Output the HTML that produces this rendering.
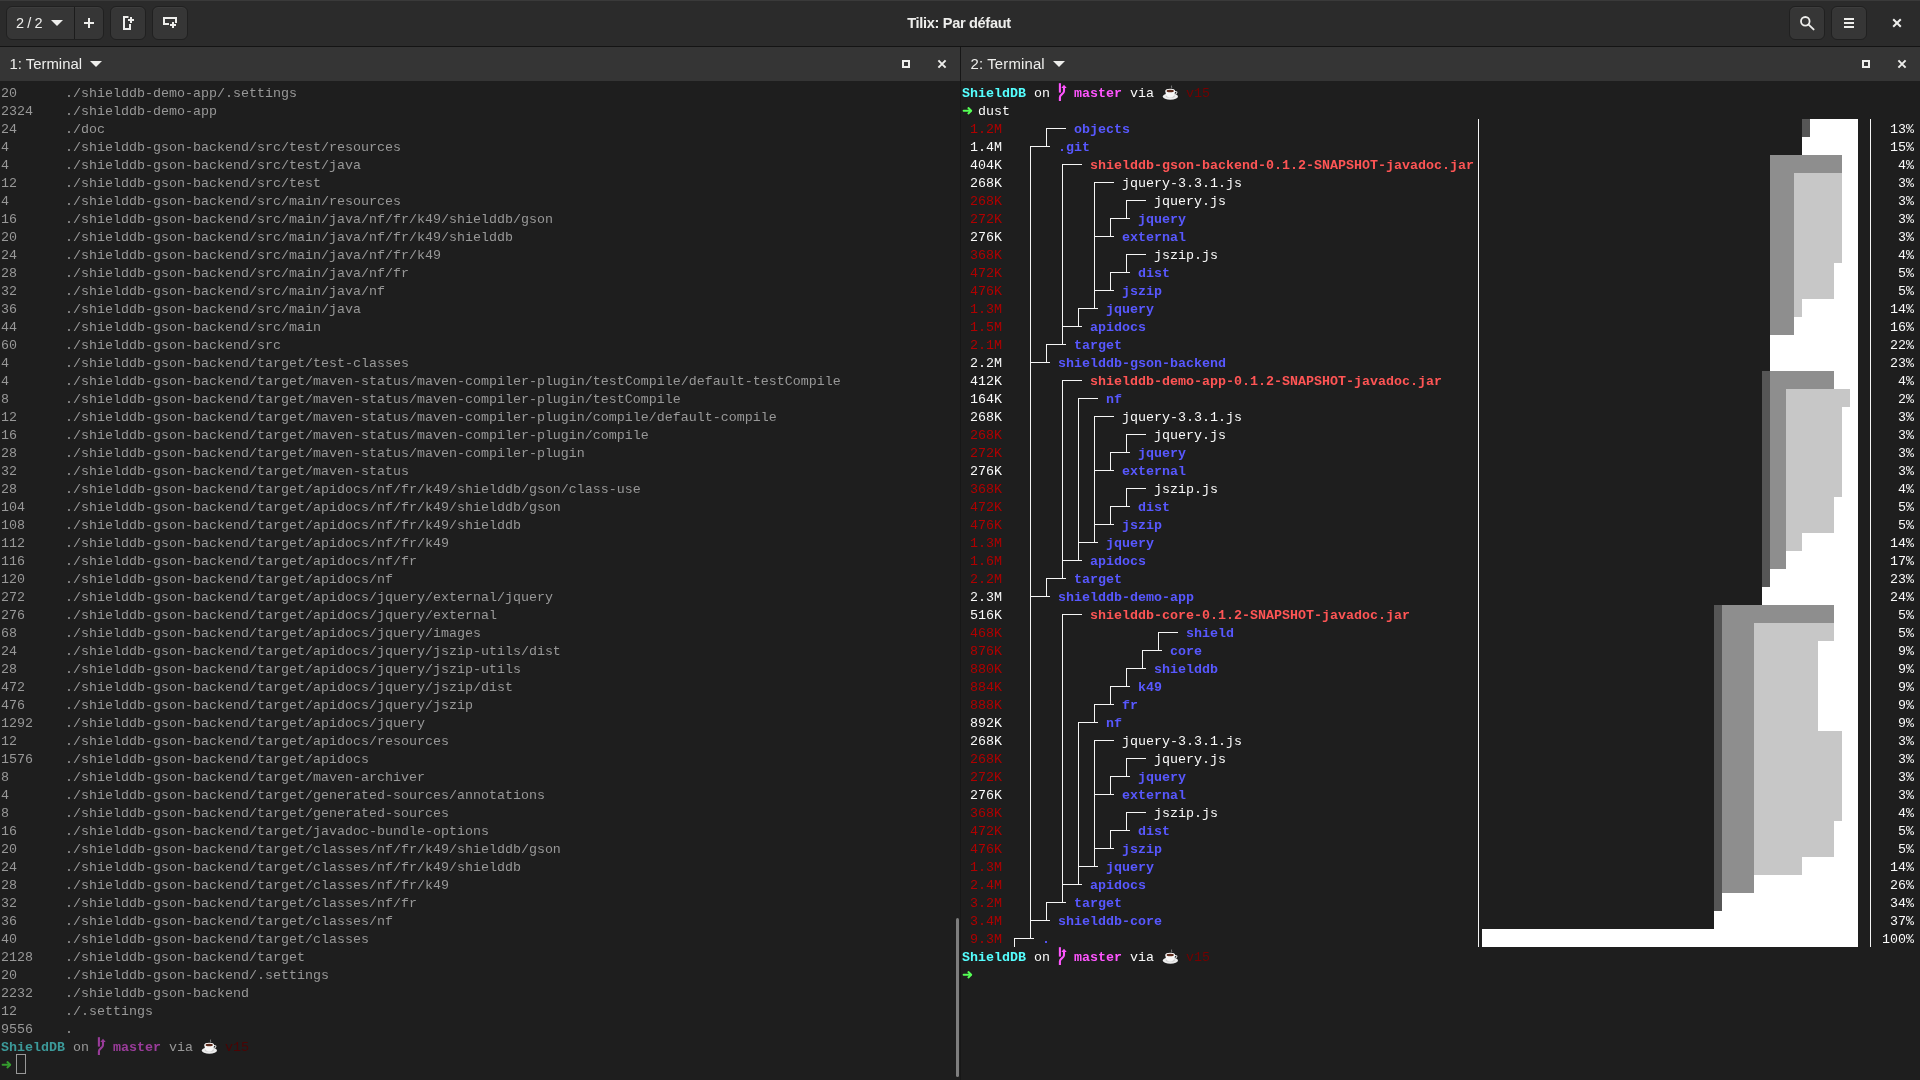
<!DOCTYPE html>
<html><head><meta charset="utf-8"><title>Tilix: Par défaut</title>
<style>
html,body{margin:0;padding:0}
body{width:1920px;height:1080px;overflow:hidden;background:#1e1e1e;position:relative;font-family:"Liberation Sans",sans-serif}
.ln{position:absolute;margin-top:2px;height:18px;line-height:18px;white-space:pre;font-family:"Liberation Mono",monospace;font-size:13.333px;letter-spacing:0}
.ln b{font-weight:bold}
.g{position:absolute;overflow:visible}
.a{position:absolute}
#hdr{position:absolute;left:0;top:0;width:1920px;height:46px;background:#2b2b2b;border-bottom:1px solid #141414;box-shadow:inset 0 1px 0 #3a3a3a}
.btn{position:absolute;top:6px;height:32px;background:#363636;border:1px solid #202020;border-radius:6px;box-sizing:content-box;box-shadow:inset 0 1px 0 #3d3d3d}
.pt{position:absolute;top:47px;height:34px;background:#353535}
.ptt{position:absolute;top:47px;height:34px;line-height:34px;font-size:14.9px;color:#eeeeec}
#title{position:absolute;left:-1px;top:0;width:1920px;height:46px;line-height:46px;text-align:center;color:#eeeeec;font-weight:bold;font-size:14.6px;letter-spacing:-0.33px}
#w{position:absolute;left:0;top:0;width:1920px;height:1080px;will-change:transform}
</style></head><body><div id="w">
<div id="hdr"></div>
<div id="title">Tilix: Par défaut</div>
<div class="btn" style="left:6px;width:96px"></div><div class="a" style="left:74px;top:7px;width:1px;height:32px;background:#1c1c1c"></div>
<div class="btn" style="left:110px;width:34px"></div>
<div class="btn" style="left:152px;width:34px"></div>
<div class="btn" style="left:1789px;width:34px"></div>
<div class="btn" style="left:1831px;width:34px"></div>
<div class="a" style="left:16px;top:7px;height:32px;line-height:32px;font-size:14.5px;word-spacing:-0.8px;color:#eeeeec">2 / 2</div>
<svg class="g" style="left:50px;top:19px" width="14" height="8" viewBox="0 0 14 8"><path d="M1 1H13L7 7Z" fill="#eeeeec"/></svg>
<svg class="g" style="left:81px;top:15px" width="16" height="16" viewBox="0 0 16 16"><path d="M7 3H9V7H13V9H9V13H7V9H3V7H7Z" fill="#eeeeec"/></svg>
<svg class="g" style="left:120px;top:15px" width="16" height="16" viewBox="0 0 16 16"><path d="M3 1H8.5V3H5V13H9V9H11V15H3Z" fill="#eeeeec"/><path d="M10 2H12V4H14V6H12V8H10V6H8V4H10Z" fill="#eeeeec"/></svg>
<svg class="g" style="left:162px;top:15px" width="16" height="16" viewBox="0 0 16 16"><path d="M1 2H15V8H13V4H3V8H7V10H1Z" fill="#eeeeec"/><path d="M10 7H12V9H14V11H12V13H10V11H8V9H10Z" fill="#eeeeec"/></svg>
<svg class="g" style="left:1799px;top:15px" width="16" height="16" viewBox="0 0 16 16"><circle cx="6.3" cy="6.3" r="4.3" fill="none" stroke="#eeeeec" stroke-width="1.8"/><path d="M9.6 9.6L14.6 14.4" stroke="#eeeeec" stroke-width="1.9" stroke-linecap="round"/></svg>
<svg class="g" style="left:1841px;top:15px" width="16" height="16" viewBox="0 0 16 16"><path d="M3 3H13V5H3ZM3 7H13V9H3ZM3 11H13V13H3Z" fill="#eeeeec"/></svg>
<svg class="g" style="left:1889px;top:15px" width="16" height="16" viewBox="0 0 16 16"><path d="M4.2 4.2L11.8 11.8M11.8 4.2L4.2 11.8" stroke="#eeeeec" stroke-width="2" fill="none"/></svg>
<div class="pt" style="left:0;width:960px"></div><div class="pt" style="left:961px;width:959px"></div>
<div class="a" style="left:960px;top:47px;width:1px;height:1033px;background:#171717"></div>
<div class="ptt" style="left:9.5px">1: Terminal</div>
<svg class="g" style="left:89px;top:60px" width="14" height="8" viewBox="0 0 14 8"><path d="M1 1H13L7 7Z" fill="#eeeeec"/></svg>
<div class="ptt" style="left:970.5px;letter-spacing:0.16px">2: Terminal</div>
<svg class="g" style="left:1052px;top:60px" width="14" height="8" viewBox="0 0 14 8"><path d="M1 1H13L7 7Z" fill="#eeeeec"/></svg>
<div class="a" style="left:902px;top:60px;width:4px;height:4px;border:2px solid #eeeeec"></div>
<svg class="g" style="left:934px;top:56px" width="16" height="16" viewBox="0 0 16 16"><path d="M4.4 4.4L11.6 11.6M11.6 4.4L4.4 11.6" stroke="#eeeeec" stroke-width="2" fill="none"/></svg>
<div class="a" style="left:1862px;top:60px;width:4px;height:4px;border:2px solid #eeeeec"></div>
<svg class="g" style="left:1894px;top:56px" width="16" height="16" viewBox="0 0 16 16"><path d="M4.4 4.4L11.6 11.6M11.6 4.4L4.4 11.6" stroke="#eeeeec" stroke-width="2" fill="none"/></svg>
<div class="ln" style="left:1px;top:83px;color:#989898">20      ./shielddb-demo-app/.settings</div>
<div class="ln" style="left:1px;top:101px;color:#989898">2324    ./shielddb-demo-app</div>
<div class="ln" style="left:1px;top:119px;color:#989898">24      ./doc</div>
<div class="ln" style="left:1px;top:137px;color:#989898">4       ./shielddb-gson-backend/src/test/resources</div>
<div class="ln" style="left:1px;top:155px;color:#989898">4       ./shielddb-gson-backend/src/test/java</div>
<div class="ln" style="left:1px;top:173px;color:#989898">12      ./shielddb-gson-backend/src/test</div>
<div class="ln" style="left:1px;top:191px;color:#989898">4       ./shielddb-gson-backend/src/main/resources</div>
<div class="ln" style="left:1px;top:209px;color:#989898">16      ./shielddb-gson-backend/src/main/java/nf/fr/k49/shielddb/gson</div>
<div class="ln" style="left:1px;top:227px;color:#989898">20      ./shielddb-gson-backend/src/main/java/nf/fr/k49/shielddb</div>
<div class="ln" style="left:1px;top:245px;color:#989898">24      ./shielddb-gson-backend/src/main/java/nf/fr/k49</div>
<div class="ln" style="left:1px;top:263px;color:#989898">28      ./shielddb-gson-backend/src/main/java/nf/fr</div>
<div class="ln" style="left:1px;top:281px;color:#989898">32      ./shielddb-gson-backend/src/main/java/nf</div>
<div class="ln" style="left:1px;top:299px;color:#989898">36      ./shielddb-gson-backend/src/main/java</div>
<div class="ln" style="left:1px;top:317px;color:#989898">44      ./shielddb-gson-backend/src/main</div>
<div class="ln" style="left:1px;top:335px;color:#989898">60      ./shielddb-gson-backend/src</div>
<div class="ln" style="left:1px;top:353px;color:#989898">4       ./shielddb-gson-backend/target/test-classes</div>
<div class="ln" style="left:1px;top:371px;color:#989898">4       ./shielddb-gson-backend/target/maven-status/maven-compiler-plugin/testCompile/default-testCompile</div>
<div class="ln" style="left:1px;top:389px;color:#989898">8       ./shielddb-gson-backend/target/maven-status/maven-compiler-plugin/testCompile</div>
<div class="ln" style="left:1px;top:407px;color:#989898">12      ./shielddb-gson-backend/target/maven-status/maven-compiler-plugin/compile/default-compile</div>
<div class="ln" style="left:1px;top:425px;color:#989898">16      ./shielddb-gson-backend/target/maven-status/maven-compiler-plugin/compile</div>
<div class="ln" style="left:1px;top:443px;color:#989898">28      ./shielddb-gson-backend/target/maven-status/maven-compiler-plugin</div>
<div class="ln" style="left:1px;top:461px;color:#989898">32      ./shielddb-gson-backend/target/maven-status</div>
<div class="ln" style="left:1px;top:479px;color:#989898">28      ./shielddb-gson-backend/target/apidocs/nf/fr/k49/shielddb/gson/class-use</div>
<div class="ln" style="left:1px;top:497px;color:#989898">104     ./shielddb-gson-backend/target/apidocs/nf/fr/k49/shielddb/gson</div>
<div class="ln" style="left:1px;top:515px;color:#989898">108     ./shielddb-gson-backend/target/apidocs/nf/fr/k49/shielddb</div>
<div class="ln" style="left:1px;top:533px;color:#989898">112     ./shielddb-gson-backend/target/apidocs/nf/fr/k49</div>
<div class="ln" style="left:1px;top:551px;color:#989898">116     ./shielddb-gson-backend/target/apidocs/nf/fr</div>
<div class="ln" style="left:1px;top:569px;color:#989898">120     ./shielddb-gson-backend/target/apidocs/nf</div>
<div class="ln" style="left:1px;top:587px;color:#989898">272     ./shielddb-gson-backend/target/apidocs/jquery/external/jquery</div>
<div class="ln" style="left:1px;top:605px;color:#989898">276     ./shielddb-gson-backend/target/apidocs/jquery/external</div>
<div class="ln" style="left:1px;top:623px;color:#989898">68      ./shielddb-gson-backend/target/apidocs/jquery/images</div>
<div class="ln" style="left:1px;top:641px;color:#989898">24      ./shielddb-gson-backend/target/apidocs/jquery/jszip-utils/dist</div>
<div class="ln" style="left:1px;top:659px;color:#989898">28      ./shielddb-gson-backend/target/apidocs/jquery/jszip-utils</div>
<div class="ln" style="left:1px;top:677px;color:#989898">472     ./shielddb-gson-backend/target/apidocs/jquery/jszip/dist</div>
<div class="ln" style="left:1px;top:695px;color:#989898">476     ./shielddb-gson-backend/target/apidocs/jquery/jszip</div>
<div class="ln" style="left:1px;top:713px;color:#989898">1292    ./shielddb-gson-backend/target/apidocs/jquery</div>
<div class="ln" style="left:1px;top:731px;color:#989898">12      ./shielddb-gson-backend/target/apidocs/resources</div>
<div class="ln" style="left:1px;top:749px;color:#989898">1576    ./shielddb-gson-backend/target/apidocs</div>
<div class="ln" style="left:1px;top:767px;color:#989898">8       ./shielddb-gson-backend/target/maven-archiver</div>
<div class="ln" style="left:1px;top:785px;color:#989898">4       ./shielddb-gson-backend/target/generated-sources/annotations</div>
<div class="ln" style="left:1px;top:803px;color:#989898">8       ./shielddb-gson-backend/target/generated-sources</div>
<div class="ln" style="left:1px;top:821px;color:#989898">16      ./shielddb-gson-backend/target/javadoc-bundle-options</div>
<div class="ln" style="left:1px;top:839px;color:#989898">20      ./shielddb-gson-backend/target/classes/nf/fr/k49/shielddb/gson</div>
<div class="ln" style="left:1px;top:857px;color:#989898">24      ./shielddb-gson-backend/target/classes/nf/fr/k49/shielddb</div>
<div class="ln" style="left:1px;top:875px;color:#989898">28      ./shielddb-gson-backend/target/classes/nf/fr/k49</div>
<div class="ln" style="left:1px;top:893px;color:#989898">32      ./shielddb-gson-backend/target/classes/nf/fr</div>
<div class="ln" style="left:1px;top:911px;color:#989898">36      ./shielddb-gson-backend/target/classes/nf</div>
<div class="ln" style="left:1px;top:929px;color:#989898">40      ./shielddb-gson-backend/target/classes</div>
<div class="ln" style="left:1px;top:947px;color:#989898">2128    ./shielddb-gson-backend/target</div>
<div class="ln" style="left:1px;top:965px;color:#989898">20      ./shielddb-gson-backend/.settings</div>
<div class="ln" style="left:1px;top:983px;color:#989898">2232    ./shielddb-gson-backend</div>
<div class="ln" style="left:1px;top:1001px;color:#989898">12      ./.settings</div>
<div class="ln" style="left:1px;top:1019px;color:#989898">9556    .</div>
<div class="ln" style="left:1px;top:1037px;color:#989898"><b style="color:#3c9a9a">ShieldDB</b> on   <b style="color:#9a3c9a">master</b> via    <span style="color:#4b0404">v15</span></div><svg class="g" style="left:97px;top:1037px" width="10" height="18" viewBox="0 0 10 18"><g fill="none" stroke="#9a3c9a" stroke-width="2.1" stroke-linecap="butt" stroke-linejoin="round"><path d="M1.9 0.2V9.6"/><path d="M6 4V8.2C6 10.8 1.9 11.4 1.9 14.2V18"/></g><path d="M6 1.7L8.7 5.1H3.3Z" fill="#9a3c9a"/></svg><svg class="g" style="left:201px;top:1037px" width="17" height="18" viewBox="0 0 17 18"><ellipse cx="8.4" cy="13.5" rx="7.6" ry="3.2" fill="#ededed"/><ellipse cx="8.3" cy="13.2" rx="4.6" ry="1.6" fill="#cfcfcf"/><path d="M12.8 8.6C15.6 7.8 15.8 11 12.3 11.4" fill="none" stroke="#d4d4d4" stroke-width="1.1"/><path d="M3.4 7.8C3.4 12 5 14.6 8.2 14.6S13 12 13 7.8Z" fill="#f7f7f7"/><ellipse cx="8.2" cy="7.8" rx="4.8" ry="2" fill="#ffffff"/><ellipse cx="8.2" cy="8" rx="3.7" ry="1.35" fill="#5b2a1b"/><path d="M9.6 2.6C9.0 3.6 10.2 4.2 9.5 5.4" fill="none" stroke="#b8b8b8" stroke-width="0.7"/></svg>
<svg class="g" style="left:1px;top:1055px" width="12" height="18" viewBox="0 0 12 18"><g fill="none" stroke="#359c2e" stroke-linecap="round" stroke-linejoin="round"><path d="M1.6 9.75H8.6" stroke-width="1.9"/><path d="M6.4 7.1L9.2 9.75L6.4 12.4" stroke-width="2"/></g></svg><div class="a" style="left:16px;top:1054px;width:8px;height:18px;border:1px solid #989898"></div>
<div class="a" style="left:956px;top:918px;width:3px;height:159px;border-radius:2px;background:#7e7e7e"></div>
<div class="ln" style="left:962px;top:83px;color:#fafafa"><b style="color:#55ffff">ShieldDB</b> on   <b style="color:#ff55ff">master</b> via    <span style="color:#720000">v15</span></div><svg class="g" style="left:1058px;top:83px" width="10" height="18" viewBox="0 0 10 18"><g fill="none" stroke="#ff55ff" stroke-width="2.1" stroke-linecap="butt" stroke-linejoin="round"><path d="M1.9 0.2V9.6"/><path d="M6 4V8.2C6 10.8 1.9 11.4 1.9 14.2V18"/></g><path d="M6 1.7L8.7 5.1H3.3Z" fill="#ff55ff"/></svg><svg class="g" style="left:1162px;top:83px" width="17" height="18" viewBox="0 0 17 18"><ellipse cx="8.4" cy="13.5" rx="7.6" ry="3.2" fill="#ededed"/><ellipse cx="8.3" cy="13.2" rx="4.6" ry="1.6" fill="#cfcfcf"/><path d="M12.8 8.6C15.6 7.8 15.8 11 12.3 11.4" fill="none" stroke="#d4d4d4" stroke-width="1.1"/><path d="M3.4 7.8C3.4 12 5 14.6 8.2 14.6S13 12 13 7.8Z" fill="#f7f7f7"/><ellipse cx="8.2" cy="7.8" rx="4.8" ry="2" fill="#ffffff"/><ellipse cx="8.2" cy="8" rx="3.7" ry="1.35" fill="#5b2a1b"/><path d="M9.6 2.6C9.0 3.6 10.2 4.2 9.5 5.4" fill="none" stroke="#b8b8b8" stroke-width="0.7"/></svg>
<svg class="g" style="left:962px;top:101px" width="12" height="18" viewBox="0 0 12 18"><g fill="none" stroke="#55ff55" stroke-linecap="round" stroke-linejoin="round"><path d="M1.6 9.75H8.6" stroke-width="1.9"/><path d="M6.4 7.1L9.2 9.75L6.4 12.4" stroke-width="2"/></g></svg><div class="ln" style="left:962px;top:101px;color:#fafafa">  dust</div>
<div class="ln" style="left:962px;top:119px;color:#b00000"> 1.2M</div><div class="ln" style="left:1074px;top:119px;color:#5858ff"><b>objects</b></div><div class="ln" style="left:1874px;top:119px;color:#fafafa">  13%</div>
<div class="a" style="left:1802px;top:119px;width:8px;height:18px;background:#565656"></div><div class="a" style="left:1810px;top:119px;width:48px;height:18px;background:#ffffff"></div>
<div class="ln" style="left:962px;top:137px;color:#fafafa"> 1.4M</div><div class="ln" style="left:1058px;top:137px;color:#5858ff"><b>.git</b></div><div class="ln" style="left:1874px;top:137px;color:#fafafa">  15%</div>
<div class="a" style="left:1802px;top:137px;width:56px;height:18px;background:#ffffff"></div>
<div class="ln" style="left:962px;top:155px;color:#fafafa"> 404K</div><div class="ln" style="left:1090px;top:155px;color:#ff5555"><b>shielddb-gson-backend-0.1.2-SNAPSHOT-javadoc.jar</b></div><div class="ln" style="left:1874px;top:155px;color:#fafafa">   4%</div>
<div class="a" style="left:1770px;top:155px;width:72px;height:18px;background:#8e8e8e"></div><div class="a" style="left:1842px;top:155px;width:16px;height:18px;background:#ffffff"></div>
<div class="ln" style="left:962px;top:173px;color:#fafafa"> 268K</div><div class="ln" style="left:1122px;top:173px;color:#fafafa">jquery-3.3.1.js</div><div class="ln" style="left:1874px;top:173px;color:#fafafa">   3%</div>
<div class="a" style="left:1770px;top:173px;width:24px;height:18px;background:#8e8e8e"></div><div class="a" style="left:1794px;top:173px;width:48px;height:18px;background:#c7c7c7"></div><div class="a" style="left:1842px;top:173px;width:16px;height:18px;background:#ffffff"></div>
<div class="ln" style="left:962px;top:191px;color:#b00000"> 268K</div><div class="ln" style="left:1154px;top:191px;color:#fafafa">jquery.js</div><div class="ln" style="left:1874px;top:191px;color:#fafafa">   3%</div>
<div class="a" style="left:1770px;top:191px;width:24px;height:18px;background:#8e8e8e"></div><div class="a" style="left:1794px;top:191px;width:48px;height:18px;background:#c7c7c7"></div><div class="a" style="left:1842px;top:191px;width:16px;height:18px;background:#ffffff"></div>
<div class="ln" style="left:962px;top:209px;color:#b00000"> 272K</div><div class="ln" style="left:1138px;top:209px;color:#5858ff"><b>jquery</b></div><div class="ln" style="left:1874px;top:209px;color:#fafafa">   3%</div>
<div class="a" style="left:1770px;top:209px;width:24px;height:18px;background:#8e8e8e"></div><div class="a" style="left:1794px;top:209px;width:48px;height:18px;background:#c7c7c7"></div><div class="a" style="left:1842px;top:209px;width:16px;height:18px;background:#ffffff"></div>
<div class="ln" style="left:962px;top:227px;color:#fafafa"> 276K</div><div class="ln" style="left:1122px;top:227px;color:#5858ff"><b>external</b></div><div class="ln" style="left:1874px;top:227px;color:#fafafa">   3%</div>
<div class="a" style="left:1770px;top:227px;width:24px;height:18px;background:#8e8e8e"></div><div class="a" style="left:1794px;top:227px;width:48px;height:18px;background:#c7c7c7"></div><div class="a" style="left:1842px;top:227px;width:16px;height:18px;background:#ffffff"></div>
<div class="ln" style="left:962px;top:245px;color:#b00000"> 368K</div><div class="ln" style="left:1154px;top:245px;color:#fafafa">jszip.js</div><div class="ln" style="left:1874px;top:245px;color:#fafafa">   4%</div>
<div class="a" style="left:1770px;top:245px;width:24px;height:18px;background:#8e8e8e"></div><div class="a" style="left:1794px;top:245px;width:48px;height:18px;background:#c7c7c7"></div><div class="a" style="left:1842px;top:245px;width:16px;height:18px;background:#ffffff"></div>
<div class="ln" style="left:962px;top:263px;color:#b00000"> 472K</div><div class="ln" style="left:1138px;top:263px;color:#5858ff"><b>dist</b></div><div class="ln" style="left:1874px;top:263px;color:#fafafa">   5%</div>
<div class="a" style="left:1770px;top:263px;width:24px;height:18px;background:#8e8e8e"></div><div class="a" style="left:1794px;top:263px;width:40px;height:18px;background:#c7c7c7"></div><div class="a" style="left:1834px;top:263px;width:24px;height:18px;background:#ffffff"></div>
<div class="ln" style="left:962px;top:281px;color:#b00000"> 476K</div><div class="ln" style="left:1122px;top:281px;color:#5858ff"><b>jszip</b></div><div class="ln" style="left:1874px;top:281px;color:#fafafa">   5%</div>
<div class="a" style="left:1770px;top:281px;width:24px;height:18px;background:#8e8e8e"></div><div class="a" style="left:1794px;top:281px;width:40px;height:18px;background:#c7c7c7"></div><div class="a" style="left:1834px;top:281px;width:24px;height:18px;background:#ffffff"></div>
<div class="ln" style="left:962px;top:299px;color:#b00000"> 1.3M</div><div class="ln" style="left:1106px;top:299px;color:#5858ff"><b>jquery</b></div><div class="ln" style="left:1874px;top:299px;color:#fafafa">  14%</div>
<div class="a" style="left:1770px;top:299px;width:24px;height:18px;background:#8e8e8e"></div><div class="a" style="left:1794px;top:299px;width:8px;height:18px;background:#c7c7c7"></div><div class="a" style="left:1802px;top:299px;width:56px;height:18px;background:#ffffff"></div>
<div class="ln" style="left:962px;top:317px;color:#b00000"> 1.5M</div><div class="ln" style="left:1090px;top:317px;color:#5858ff"><b>apidocs</b></div><div class="ln" style="left:1874px;top:317px;color:#fafafa">  16%</div>
<div class="a" style="left:1770px;top:317px;width:24px;height:18px;background:#8e8e8e"></div><div class="a" style="left:1794px;top:317px;width:64px;height:18px;background:#ffffff"></div>
<div class="ln" style="left:962px;top:335px;color:#b00000"> 2.1M</div><div class="ln" style="left:1074px;top:335px;color:#5858ff"><b>target</b></div><div class="ln" style="left:1874px;top:335px;color:#fafafa">  22%</div>
<div class="a" style="left:1770px;top:335px;width:88px;height:18px;background:#ffffff"></div>
<div class="ln" style="left:962px;top:353px;color:#fafafa"> 2.2M</div><div class="ln" style="left:1058px;top:353px;color:#5858ff"><b>shielddb-gson-backend</b></div><div class="ln" style="left:1874px;top:353px;color:#fafafa">  23%</div>
<div class="a" style="left:1770px;top:353px;width:88px;height:18px;background:#ffffff"></div>
<div class="ln" style="left:962px;top:371px;color:#fafafa"> 412K</div><div class="ln" style="left:1090px;top:371px;color:#ff5555"><b>shielddb-demo-app-0.1.2-SNAPSHOT-javadoc.jar</b></div><div class="ln" style="left:1874px;top:371px;color:#fafafa">   4%</div>
<div class="a" style="left:1762px;top:371px;width:8px;height:18px;background:#565656"></div><div class="a" style="left:1770px;top:371px;width:64px;height:18px;background:#8e8e8e"></div><div class="a" style="left:1834px;top:371px;width:24px;height:18px;background:#ffffff"></div>
<div class="ln" style="left:962px;top:389px;color:#fafafa"> 164K</div><div class="ln" style="left:1106px;top:389px;color:#5858ff"><b>nf</b></div><div class="ln" style="left:1874px;top:389px;color:#fafafa">   2%</div>
<div class="a" style="left:1762px;top:389px;width:8px;height:18px;background:#565656"></div><div class="a" style="left:1770px;top:389px;width:16px;height:18px;background:#8e8e8e"></div><div class="a" style="left:1786px;top:389px;width:64px;height:18px;background:#c7c7c7"></div><div class="a" style="left:1850px;top:389px;width:8px;height:18px;background:#ffffff"></div>
<div class="ln" style="left:962px;top:407px;color:#fafafa"> 268K</div><div class="ln" style="left:1122px;top:407px;color:#fafafa">jquery-3.3.1.js</div><div class="ln" style="left:1874px;top:407px;color:#fafafa">   3%</div>
<div class="a" style="left:1762px;top:407px;width:8px;height:18px;background:#565656"></div><div class="a" style="left:1770px;top:407px;width:16px;height:18px;background:#8e8e8e"></div><div class="a" style="left:1786px;top:407px;width:56px;height:18px;background:#c7c7c7"></div><div class="a" style="left:1842px;top:407px;width:16px;height:18px;background:#ffffff"></div>
<div class="ln" style="left:962px;top:425px;color:#b00000"> 268K</div><div class="ln" style="left:1154px;top:425px;color:#fafafa">jquery.js</div><div class="ln" style="left:1874px;top:425px;color:#fafafa">   3%</div>
<div class="a" style="left:1762px;top:425px;width:8px;height:18px;background:#565656"></div><div class="a" style="left:1770px;top:425px;width:16px;height:18px;background:#8e8e8e"></div><div class="a" style="left:1786px;top:425px;width:56px;height:18px;background:#c7c7c7"></div><div class="a" style="left:1842px;top:425px;width:16px;height:18px;background:#ffffff"></div>
<div class="ln" style="left:962px;top:443px;color:#b00000"> 272K</div><div class="ln" style="left:1138px;top:443px;color:#5858ff"><b>jquery</b></div><div class="ln" style="left:1874px;top:443px;color:#fafafa">   3%</div>
<div class="a" style="left:1762px;top:443px;width:8px;height:18px;background:#565656"></div><div class="a" style="left:1770px;top:443px;width:16px;height:18px;background:#8e8e8e"></div><div class="a" style="left:1786px;top:443px;width:56px;height:18px;background:#c7c7c7"></div><div class="a" style="left:1842px;top:443px;width:16px;height:18px;background:#ffffff"></div>
<div class="ln" style="left:962px;top:461px;color:#fafafa"> 276K</div><div class="ln" style="left:1122px;top:461px;color:#5858ff"><b>external</b></div><div class="ln" style="left:1874px;top:461px;color:#fafafa">   3%</div>
<div class="a" style="left:1762px;top:461px;width:8px;height:18px;background:#565656"></div><div class="a" style="left:1770px;top:461px;width:16px;height:18px;background:#8e8e8e"></div><div class="a" style="left:1786px;top:461px;width:56px;height:18px;background:#c7c7c7"></div><div class="a" style="left:1842px;top:461px;width:16px;height:18px;background:#ffffff"></div>
<div class="ln" style="left:962px;top:479px;color:#b00000"> 368K</div><div class="ln" style="left:1154px;top:479px;color:#fafafa">jszip.js</div><div class="ln" style="left:1874px;top:479px;color:#fafafa">   4%</div>
<div class="a" style="left:1762px;top:479px;width:8px;height:18px;background:#565656"></div><div class="a" style="left:1770px;top:479px;width:16px;height:18px;background:#8e8e8e"></div><div class="a" style="left:1786px;top:479px;width:56px;height:18px;background:#c7c7c7"></div><div class="a" style="left:1842px;top:479px;width:16px;height:18px;background:#ffffff"></div>
<div class="ln" style="left:962px;top:497px;color:#b00000"> 472K</div><div class="ln" style="left:1138px;top:497px;color:#5858ff"><b>dist</b></div><div class="ln" style="left:1874px;top:497px;color:#fafafa">   5%</div>
<div class="a" style="left:1762px;top:497px;width:8px;height:18px;background:#565656"></div><div class="a" style="left:1770px;top:497px;width:16px;height:18px;background:#8e8e8e"></div><div class="a" style="left:1786px;top:497px;width:48px;height:18px;background:#c7c7c7"></div><div class="a" style="left:1834px;top:497px;width:24px;height:18px;background:#ffffff"></div>
<div class="ln" style="left:962px;top:515px;color:#b00000"> 476K</div><div class="ln" style="left:1122px;top:515px;color:#5858ff"><b>jszip</b></div><div class="ln" style="left:1874px;top:515px;color:#fafafa">   5%</div>
<div class="a" style="left:1762px;top:515px;width:8px;height:18px;background:#565656"></div><div class="a" style="left:1770px;top:515px;width:16px;height:18px;background:#8e8e8e"></div><div class="a" style="left:1786px;top:515px;width:48px;height:18px;background:#c7c7c7"></div><div class="a" style="left:1834px;top:515px;width:24px;height:18px;background:#ffffff"></div>
<div class="ln" style="left:962px;top:533px;color:#b00000"> 1.3M</div><div class="ln" style="left:1106px;top:533px;color:#5858ff"><b>jquery</b></div><div class="ln" style="left:1874px;top:533px;color:#fafafa">  14%</div>
<div class="a" style="left:1762px;top:533px;width:8px;height:18px;background:#565656"></div><div class="a" style="left:1770px;top:533px;width:16px;height:18px;background:#8e8e8e"></div><div class="a" style="left:1786px;top:533px;width:16px;height:18px;background:#c7c7c7"></div><div class="a" style="left:1802px;top:533px;width:56px;height:18px;background:#ffffff"></div>
<div class="ln" style="left:962px;top:551px;color:#b00000"> 1.6M</div><div class="ln" style="left:1090px;top:551px;color:#5858ff"><b>apidocs</b></div><div class="ln" style="left:1874px;top:551px;color:#fafafa">  17%</div>
<div class="a" style="left:1762px;top:551px;width:8px;height:18px;background:#565656"></div><div class="a" style="left:1770px;top:551px;width:16px;height:18px;background:#8e8e8e"></div><div class="a" style="left:1786px;top:551px;width:72px;height:18px;background:#ffffff"></div>
<div class="ln" style="left:962px;top:569px;color:#b00000"> 2.2M</div><div class="ln" style="left:1074px;top:569px;color:#5858ff"><b>target</b></div><div class="ln" style="left:1874px;top:569px;color:#fafafa">  23%</div>
<div class="a" style="left:1762px;top:569px;width:8px;height:18px;background:#565656"></div><div class="a" style="left:1770px;top:569px;width:88px;height:18px;background:#ffffff"></div>
<div class="ln" style="left:962px;top:587px;color:#fafafa"> 2.3M</div><div class="ln" style="left:1058px;top:587px;color:#5858ff"><b>shielddb-demo-app</b></div><div class="ln" style="left:1874px;top:587px;color:#fafafa">  24%</div>
<div class="a" style="left:1762px;top:587px;width:96px;height:18px;background:#ffffff"></div>
<div class="ln" style="left:962px;top:605px;color:#fafafa"> 516K</div><div class="ln" style="left:1090px;top:605px;color:#ff5555"><b>shielddb-core-0.1.2-SNAPSHOT-javadoc.jar</b></div><div class="ln" style="left:1874px;top:605px;color:#fafafa">   5%</div>
<div class="a" style="left:1714px;top:605px;width:8px;height:18px;background:#565656"></div><div class="a" style="left:1722px;top:605px;width:112px;height:18px;background:#8e8e8e"></div><div class="a" style="left:1834px;top:605px;width:24px;height:18px;background:#ffffff"></div>
<div class="ln" style="left:962px;top:623px;color:#b00000"> 468K</div><div class="ln" style="left:1186px;top:623px;color:#5858ff"><b>shield</b></div><div class="ln" style="left:1874px;top:623px;color:#fafafa">   5%</div>
<div class="a" style="left:1714px;top:623px;width:8px;height:18px;background:#565656"></div><div class="a" style="left:1722px;top:623px;width:32px;height:18px;background:#8e8e8e"></div><div class="a" style="left:1754px;top:623px;width:80px;height:18px;background:#c7c7c7"></div><div class="a" style="left:1834px;top:623px;width:24px;height:18px;background:#ffffff"></div>
<div class="ln" style="left:962px;top:641px;color:#b00000"> 876K</div><div class="ln" style="left:1170px;top:641px;color:#5858ff"><b>core</b></div><div class="ln" style="left:1874px;top:641px;color:#fafafa">   9%</div>
<div class="a" style="left:1714px;top:641px;width:8px;height:18px;background:#565656"></div><div class="a" style="left:1722px;top:641px;width:32px;height:18px;background:#8e8e8e"></div><div class="a" style="left:1754px;top:641px;width:64px;height:18px;background:#c7c7c7"></div><div class="a" style="left:1818px;top:641px;width:40px;height:18px;background:#ffffff"></div>
<div class="ln" style="left:962px;top:659px;color:#b00000"> 880K</div><div class="ln" style="left:1154px;top:659px;color:#5858ff"><b>shielddb</b></div><div class="ln" style="left:1874px;top:659px;color:#fafafa">   9%</div>
<div class="a" style="left:1714px;top:659px;width:8px;height:18px;background:#565656"></div><div class="a" style="left:1722px;top:659px;width:32px;height:18px;background:#8e8e8e"></div><div class="a" style="left:1754px;top:659px;width:64px;height:18px;background:#c7c7c7"></div><div class="a" style="left:1818px;top:659px;width:40px;height:18px;background:#ffffff"></div>
<div class="ln" style="left:962px;top:677px;color:#b00000"> 884K</div><div class="ln" style="left:1138px;top:677px;color:#5858ff"><b>k49</b></div><div class="ln" style="left:1874px;top:677px;color:#fafafa">   9%</div>
<div class="a" style="left:1714px;top:677px;width:8px;height:18px;background:#565656"></div><div class="a" style="left:1722px;top:677px;width:32px;height:18px;background:#8e8e8e"></div><div class="a" style="left:1754px;top:677px;width:64px;height:18px;background:#c7c7c7"></div><div class="a" style="left:1818px;top:677px;width:40px;height:18px;background:#ffffff"></div>
<div class="ln" style="left:962px;top:695px;color:#b00000"> 888K</div><div class="ln" style="left:1122px;top:695px;color:#5858ff"><b>fr</b></div><div class="ln" style="left:1874px;top:695px;color:#fafafa">   9%</div>
<div class="a" style="left:1714px;top:695px;width:8px;height:18px;background:#565656"></div><div class="a" style="left:1722px;top:695px;width:32px;height:18px;background:#8e8e8e"></div><div class="a" style="left:1754px;top:695px;width:64px;height:18px;background:#c7c7c7"></div><div class="a" style="left:1818px;top:695px;width:40px;height:18px;background:#ffffff"></div>
<div class="ln" style="left:962px;top:713px;color:#fafafa"> 892K</div><div class="ln" style="left:1106px;top:713px;color:#5858ff"><b>nf</b></div><div class="ln" style="left:1874px;top:713px;color:#fafafa">   9%</div>
<div class="a" style="left:1714px;top:713px;width:8px;height:18px;background:#565656"></div><div class="a" style="left:1722px;top:713px;width:32px;height:18px;background:#8e8e8e"></div><div class="a" style="left:1754px;top:713px;width:64px;height:18px;background:#c7c7c7"></div><div class="a" style="left:1818px;top:713px;width:40px;height:18px;background:#ffffff"></div>
<div class="ln" style="left:962px;top:731px;color:#fafafa"> 268K</div><div class="ln" style="left:1122px;top:731px;color:#fafafa">jquery-3.3.1.js</div><div class="ln" style="left:1874px;top:731px;color:#fafafa">   3%</div>
<div class="a" style="left:1714px;top:731px;width:8px;height:18px;background:#565656"></div><div class="a" style="left:1722px;top:731px;width:32px;height:18px;background:#8e8e8e"></div><div class="a" style="left:1754px;top:731px;width:88px;height:18px;background:#c7c7c7"></div><div class="a" style="left:1842px;top:731px;width:16px;height:18px;background:#ffffff"></div>
<div class="ln" style="left:962px;top:749px;color:#b00000"> 268K</div><div class="ln" style="left:1154px;top:749px;color:#fafafa">jquery.js</div><div class="ln" style="left:1874px;top:749px;color:#fafafa">   3%</div>
<div class="a" style="left:1714px;top:749px;width:8px;height:18px;background:#565656"></div><div class="a" style="left:1722px;top:749px;width:32px;height:18px;background:#8e8e8e"></div><div class="a" style="left:1754px;top:749px;width:88px;height:18px;background:#c7c7c7"></div><div class="a" style="left:1842px;top:749px;width:16px;height:18px;background:#ffffff"></div>
<div class="ln" style="left:962px;top:767px;color:#b00000"> 272K</div><div class="ln" style="left:1138px;top:767px;color:#5858ff"><b>jquery</b></div><div class="ln" style="left:1874px;top:767px;color:#fafafa">   3%</div>
<div class="a" style="left:1714px;top:767px;width:8px;height:18px;background:#565656"></div><div class="a" style="left:1722px;top:767px;width:32px;height:18px;background:#8e8e8e"></div><div class="a" style="left:1754px;top:767px;width:88px;height:18px;background:#c7c7c7"></div><div class="a" style="left:1842px;top:767px;width:16px;height:18px;background:#ffffff"></div>
<div class="ln" style="left:962px;top:785px;color:#fafafa"> 276K</div><div class="ln" style="left:1122px;top:785px;color:#5858ff"><b>external</b></div><div class="ln" style="left:1874px;top:785px;color:#fafafa">   3%</div>
<div class="a" style="left:1714px;top:785px;width:8px;height:18px;background:#565656"></div><div class="a" style="left:1722px;top:785px;width:32px;height:18px;background:#8e8e8e"></div><div class="a" style="left:1754px;top:785px;width:88px;height:18px;background:#c7c7c7"></div><div class="a" style="left:1842px;top:785px;width:16px;height:18px;background:#ffffff"></div>
<div class="ln" style="left:962px;top:803px;color:#b00000"> 368K</div><div class="ln" style="left:1154px;top:803px;color:#fafafa">jszip.js</div><div class="ln" style="left:1874px;top:803px;color:#fafafa">   4%</div>
<div class="a" style="left:1714px;top:803px;width:8px;height:18px;background:#565656"></div><div class="a" style="left:1722px;top:803px;width:32px;height:18px;background:#8e8e8e"></div><div class="a" style="left:1754px;top:803px;width:88px;height:18px;background:#c7c7c7"></div><div class="a" style="left:1842px;top:803px;width:16px;height:18px;background:#ffffff"></div>
<div class="ln" style="left:962px;top:821px;color:#b00000"> 472K</div><div class="ln" style="left:1138px;top:821px;color:#5858ff"><b>dist</b></div><div class="ln" style="left:1874px;top:821px;color:#fafafa">   5%</div>
<div class="a" style="left:1714px;top:821px;width:8px;height:18px;background:#565656"></div><div class="a" style="left:1722px;top:821px;width:32px;height:18px;background:#8e8e8e"></div><div class="a" style="left:1754px;top:821px;width:80px;height:18px;background:#c7c7c7"></div><div class="a" style="left:1834px;top:821px;width:24px;height:18px;background:#ffffff"></div>
<div class="ln" style="left:962px;top:839px;color:#b00000"> 476K</div><div class="ln" style="left:1122px;top:839px;color:#5858ff"><b>jszip</b></div><div class="ln" style="left:1874px;top:839px;color:#fafafa">   5%</div>
<div class="a" style="left:1714px;top:839px;width:8px;height:18px;background:#565656"></div><div class="a" style="left:1722px;top:839px;width:32px;height:18px;background:#8e8e8e"></div><div class="a" style="left:1754px;top:839px;width:80px;height:18px;background:#c7c7c7"></div><div class="a" style="left:1834px;top:839px;width:24px;height:18px;background:#ffffff"></div>
<div class="ln" style="left:962px;top:857px;color:#b00000"> 1.3M</div><div class="ln" style="left:1106px;top:857px;color:#5858ff"><b>jquery</b></div><div class="ln" style="left:1874px;top:857px;color:#fafafa">  14%</div>
<div class="a" style="left:1714px;top:857px;width:8px;height:18px;background:#565656"></div><div class="a" style="left:1722px;top:857px;width:32px;height:18px;background:#8e8e8e"></div><div class="a" style="left:1754px;top:857px;width:48px;height:18px;background:#c7c7c7"></div><div class="a" style="left:1802px;top:857px;width:56px;height:18px;background:#ffffff"></div>
<div class="ln" style="left:962px;top:875px;color:#b00000"> 2.4M</div><div class="ln" style="left:1090px;top:875px;color:#5858ff"><b>apidocs</b></div><div class="ln" style="left:1874px;top:875px;color:#fafafa">  26%</div>
<div class="a" style="left:1714px;top:875px;width:8px;height:18px;background:#565656"></div><div class="a" style="left:1722px;top:875px;width:32px;height:18px;background:#8e8e8e"></div><div class="a" style="left:1754px;top:875px;width:104px;height:18px;background:#ffffff"></div>
<div class="ln" style="left:962px;top:893px;color:#b00000"> 3.2M</div><div class="ln" style="left:1074px;top:893px;color:#5858ff"><b>target</b></div><div class="ln" style="left:1874px;top:893px;color:#fafafa">  34%</div>
<div class="a" style="left:1714px;top:893px;width:8px;height:18px;background:#565656"></div><div class="a" style="left:1722px;top:893px;width:136px;height:18px;background:#ffffff"></div>
<div class="ln" style="left:962px;top:911px;color:#b00000"> 3.4M</div><div class="ln" style="left:1058px;top:911px;color:#5858ff"><b>shielddb-core</b></div><div class="ln" style="left:1874px;top:911px;color:#fafafa">  37%</div>
<div class="a" style="left:1714px;top:911px;width:144px;height:18px;background:#ffffff"></div>
<div class="ln" style="left:962px;top:929px;color:#b00000"> 9.3M</div><div class="ln" style="left:1042px;top:929px;color:#5858ff"><b>.</b></div><div class="ln" style="left:1874px;top:929px;color:#fafafa"> 100%</div>
<div class="a" style="left:1482px;top:929px;width:376px;height:18px;background:#ffffff"></div>
<svg class="g" style="left:962px;top:119px" width="952" height="828" viewBox="0 0 952 828" shape-rendering="crispEdges"><path d="M84.5 18V9.5H88M88 9.5H96M96 9.5H104M68.5 36V27.5H72M72 27.5H80M80 27.5H88M84.5 18V27.5M68.5 36V54M100.5 54V45.5H104M104 45.5H112M112 45.5H120M68.5 54V72M100.5 54V72M132.5 72V63.5H136M136 63.5H144M144 63.5H152M68.5 72V90M100.5 72V90M132.5 72V90M164.5 90V81.5H168M168 81.5H176M176 81.5H184M68.5 90V108M100.5 90V108M132.5 90V108M148.5 108V99.5H152M152 99.5H160M160 99.5H168M164.5 90V99.5M68.5 108V126M100.5 108V126M132.5 108V126M132.5 117.5H136M136 117.5H144M144 117.5H152M148.5 108V117.5M68.5 126V144M100.5 126V144M132.5 126V144M164.5 144V135.5H168M168 135.5H176M176 135.5H184M68.5 144V162M100.5 144V162M132.5 144V162M148.5 162V153.5H152M152 153.5H160M160 153.5H168M164.5 144V153.5M68.5 162V180M100.5 162V180M132.5 162V180M132.5 171.5H136M136 171.5H144M144 171.5H152M148.5 162V171.5M68.5 180V198M100.5 180V198M116.5 198V189.5H120M120 189.5H128M128 189.5H136M132.5 180V189.5M68.5 198V216M100.5 198V216M100.5 207.5H104M104 207.5H112M112 207.5H120M116.5 198V207.5M68.5 216V234M84.5 234V225.5H88M88 225.5H96M96 225.5H104M100.5 216V225.5M68.5 234V252M68.5 243.5H72M72 243.5H80M80 243.5H88M84.5 234V243.5M68.5 252V270M100.5 270V261.5H104M104 261.5H112M112 261.5H120M68.5 270V288M100.5 270V288M116.5 288V279.5H120M120 279.5H128M128 279.5H136M68.5 288V306M100.5 288V306M116.5 288V306M132.5 306V297.5H136M136 297.5H144M144 297.5H152M68.5 306V324M100.5 306V324M116.5 306V324M132.5 306V324M164.5 324V315.5H168M168 315.5H176M176 315.5H184M68.5 324V342M100.5 324V342M116.5 324V342M132.5 324V342M148.5 342V333.5H152M152 333.5H160M160 333.5H168M164.5 324V333.5M68.5 342V360M100.5 342V360M116.5 342V360M132.5 342V360M132.5 351.5H136M136 351.5H144M144 351.5H152M148.5 342V351.5M68.5 360V378M100.5 360V378M116.5 360V378M132.5 360V378M164.5 378V369.5H168M168 369.5H176M176 369.5H184M68.5 378V396M100.5 378V396M116.5 378V396M132.5 378V396M148.5 396V387.5H152M152 387.5H160M160 387.5H168M164.5 378V387.5M68.5 396V414M100.5 396V414M116.5 396V414M132.5 396V414M132.5 405.5H136M136 405.5H144M144 405.5H152M148.5 396V405.5M68.5 414V432M100.5 414V432M116.5 414V432M116.5 423.5H120M120 423.5H128M128 423.5H136M132.5 414V423.5M68.5 432V450M100.5 432V450M100.5 441.5H104M104 441.5H112M112 441.5H120M116.5 432V441.5M68.5 450V468M84.5 468V459.5H88M88 459.5H96M96 459.5H104M100.5 450V459.5M68.5 468V486M68.5 477.5H72M72 477.5H80M80 477.5H88M84.5 468V477.5M68.5 486V504M100.5 504V495.5H104M104 495.5H112M112 495.5H120M68.5 504V522M100.5 504V522M196.5 522V513.5H200M200 513.5H208M208 513.5H216M68.5 522V540M100.5 522V540M180.5 540V531.5H184M184 531.5H192M192 531.5H200M196.5 522V531.5M68.5 540V558M100.5 540V558M164.5 558V549.5H168M168 549.5H176M176 549.5H184M180.5 540V549.5M68.5 558V576M100.5 558V576M148.5 576V567.5H152M152 567.5H160M160 567.5H168M164.5 558V567.5M68.5 576V594M100.5 576V594M132.5 594V585.5H136M136 585.5H144M144 585.5H152M148.5 576V585.5M68.5 594V612M100.5 594V612M116.5 612V603.5H120M120 603.5H128M128 603.5H136M132.5 594V603.5M68.5 612V630M100.5 612V630M116.5 612V630M132.5 630V621.5H136M136 621.5H144M144 621.5H152M68.5 630V648M100.5 630V648M116.5 630V648M132.5 630V648M164.5 648V639.5H168M168 639.5H176M176 639.5H184M68.5 648V666M100.5 648V666M116.5 648V666M132.5 648V666M148.5 666V657.5H152M152 657.5H160M160 657.5H168M164.5 648V657.5M68.5 666V684M100.5 666V684M116.5 666V684M132.5 666V684M132.5 675.5H136M136 675.5H144M144 675.5H152M148.5 666V675.5M68.5 684V702M100.5 684V702M116.5 684V702M132.5 684V702M164.5 702V693.5H168M168 693.5H176M176 693.5H184M68.5 702V720M100.5 702V720M116.5 702V720M132.5 702V720M148.5 720V711.5H152M152 711.5H160M160 711.5H168M164.5 702V711.5M68.5 720V738M100.5 720V738M116.5 720V738M132.5 720V738M132.5 729.5H136M136 729.5H144M144 729.5H152M148.5 720V729.5M68.5 738V756M100.5 738V756M116.5 738V756M116.5 747.5H120M120 747.5H128M128 747.5H136M132.5 738V747.5M68.5 756V774M100.5 756V774M100.5 765.5H104M104 765.5H112M112 765.5H120M116.5 756V765.5M68.5 774V792M84.5 792V783.5H88M88 783.5H96M96 783.5H104M100.5 774V783.5M68.5 792V810M68.5 801.5H72M72 801.5H80M80 801.5H88M84.5 792V801.5M52.5 828V819.5H56M56 819.5H64M64 819.5H72M68.5 810V819.5M516.5 0V828M908.5 0V828" fill="none" stroke="#f5f5f5" stroke-width="1"/></svg>
<div class="ln" style="left:962px;top:947px;color:#fafafa"><b style="color:#55ffff">ShieldDB</b> on   <b style="color:#ff55ff">master</b> via    <span style="color:#720000">v15</span></div><svg class="g" style="left:1058px;top:947px" width="10" height="18" viewBox="0 0 10 18"><g fill="none" stroke="#ff55ff" stroke-width="2.1" stroke-linecap="butt" stroke-linejoin="round"><path d="M1.9 0.2V9.6"/><path d="M6 4V8.2C6 10.8 1.9 11.4 1.9 14.2V18"/></g><path d="M6 1.7L8.7 5.1H3.3Z" fill="#ff55ff"/></svg><svg class="g" style="left:1162px;top:947px" width="17" height="18" viewBox="0 0 17 18"><ellipse cx="8.4" cy="13.5" rx="7.6" ry="3.2" fill="#ededed"/><ellipse cx="8.3" cy="13.2" rx="4.6" ry="1.6" fill="#cfcfcf"/><path d="M12.8 8.6C15.6 7.8 15.8 11 12.3 11.4" fill="none" stroke="#d4d4d4" stroke-width="1.1"/><path d="M3.4 7.8C3.4 12 5 14.6 8.2 14.6S13 12 13 7.8Z" fill="#f7f7f7"/><ellipse cx="8.2" cy="7.8" rx="4.8" ry="2" fill="#ffffff"/><ellipse cx="8.2" cy="8" rx="3.7" ry="1.35" fill="#5b2a1b"/><path d="M9.6 2.6C9.0 3.6 10.2 4.2 9.5 5.4" fill="none" stroke="#b8b8b8" stroke-width="0.7"/></svg>
<svg class="g" style="left:962px;top:965px" width="12" height="18" viewBox="0 0 12 18"><g fill="none" stroke="#55ff55" stroke-linecap="round" stroke-linejoin="round"><path d="M1.6 9.75H8.6" stroke-width="1.9"/><path d="M6.4 7.1L9.2 9.75L6.4 12.4" stroke-width="2"/></g></svg>
</div></body></html>
